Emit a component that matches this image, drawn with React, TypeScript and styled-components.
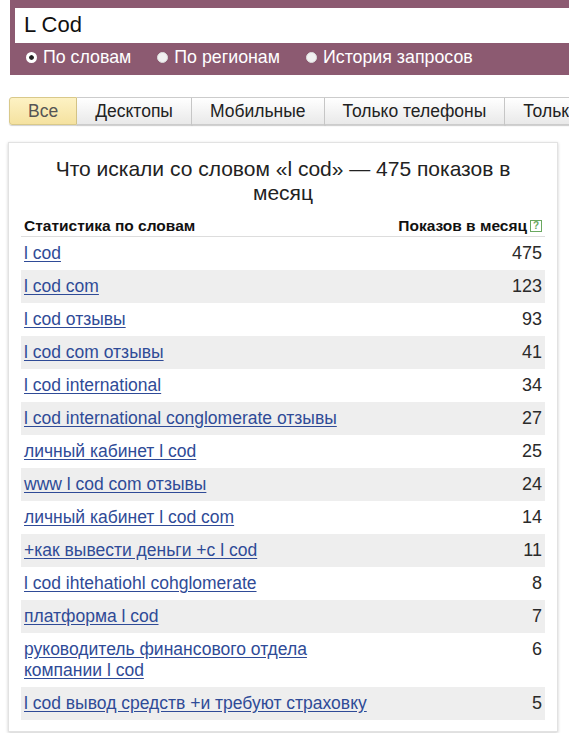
import { createGlobalStyle, styled } from 'styled-components';

const COLOR = {
  PURPLE: '#8c5a71',
  LINK: '#2f4b97',
  TEXT: '#2a2a2a',
  ZEBRA: '#eeeeee',
  LINE: '#dddddd',
};

const rows = [
  { id: 0, text: 'l cod', count: 475 },
  { id: 1, text: 'l cod com', count: 123 },
  { id: 2, text: 'l cod отзывы', count: 93 },
  { id: 3, text: 'l cod com отзывы', count: 41 },
  { id: 4, text: 'l cod international', count: 34 },
  { id: 5, text: 'l cod international conglomerate отзывы', count: 27 },
  { id: 6, text: 'личный кабинет l cod', count: 25 },
  { id: 7, text: 'www l cod com отзывы', count: 24 },
  { id: 8, text: 'личный кабинет l cod com', count: 14 },
  { id: 9, text: '+как вывести деньги +с l cod', count: 11 },
  { id: 10, text: 'l cod ihtehatiohl cohglomerate', count: 8 },
  { id: 11, text: 'платформа l cod', count: 7 },
  { id: 12, text: 'руководитель финансового отдела\nкомпании l cod', count: 6 },
  { id: 13, text: 'l cod вывод средств +и требуют страховку', count: 5 },
];

const tabs = ['Все', 'Десктопы', 'Мобильные', 'Только телефоны', 'Только планшеты'];
const modes = ['По словам', 'По регионам', 'История запросов'];

const GlobalStyle = createGlobalStyle`
  html, body {
    margin: 0;
    padding: 0;
    background: #ffffff;
    overflow: hidden;
  }
  body {
    font-family: 'Liberation Sans', Arial, sans-serif;
    color: ${COLOR.TEXT};
  }
`;

const App = () => {
  return (
    <>
      <GlobalStyle />
      <Page>
        <SearchHeader>
          <SearchInput>L Cod</SearchInput>
          <ModeRow>
            {modes.map((mode, i) => (
              <ModeOption key={mode}>
                <Radio $checked={i === 0} />
                {mode}
              </ModeOption>
            ))}
          </ModeRow>
        </SearchHeader>

        <Tabs>
          {tabs.map((tab, i) => (
            <Tab key={tab} $active={i === 0}>
              {tab}
            </Tab>
          ))}
        </Tabs>

        <Card>
          <Title>Что искали со словом «l cod» — 475 показов в месяц</Title>
          <Table>
            <HeadRow>
              <HeadCell>Статистика по словам</HeadCell>
              <HeadCell>
                Показов в месяц
                <HelpIcon>?</HelpIcon>
              </HeadCell>
            </HeadRow>
            {rows.map((row, i) => (
              <Row key={row.id} $odd={i % 2 === 1}>
                <NameCell>
                  <Link href="#">{row.text}</Link>
                </NameCell>
                <CountCell>{row.count}</CountCell>
              </Row>
            ))}
          </Table>
        </Card>
      </Page>
    </>
  );
};

const Page = styled.div`
  width: 569px;
  height: 733px;
  overflow: hidden;
`;

const SearchHeader = styled.div`
  margin-left: 10px;
  width: 700px;
  height: 75px;
  box-sizing: border-box;
  padding: 8px 0 0 5px;
  background-color: ${COLOR.PURPLE};
`;

const SearchInput = styled.div`
  height: 35px;
  box-sizing: border-box;
  padding: 3px 9px;
  background: #ffffff;
  font-size: 22px;
  line-height: 28px;
  color: #111111;
`;

const ModeRow = styled.div`
  display: flex;
  align-items: center;
  height: 28px;
  padding-left: 11px;
  gap: 26px;
`;

const ModeOption = styled.div`
  display: flex;
  align-items: center;
  gap: 6px;
  font-size: 17.8px;
  color: #ffffff;
  white-space: nowrap;
`;

const Radio = styled.span<{ $checked: boolean }>`
  width: 11px;
  height: 11px;
  border-radius: 50%;
  box-sizing: border-box;
  background: ${({ $checked }) => ($checked ? '#ffffff' : '#f1f1f1')};
  border: ${({ $checked }) => ($checked ? '3px solid #ffffff' : '1px solid #dddddd')};
  box-shadow: ${({ $checked }) => ($checked ? 'inset 0 0 0 3px #222222' : 'none')};
`;

const Tabs = styled.div`
  display: flex;
  margin: 22px 0 0 9px;
  height: 28px;
  white-space: nowrap;
`;

const Tab = styled.div<{ $active: boolean }>`
  display: flex;
  align-items: center;
  padding: 0 18px;
  box-sizing: border-box;
  height: 28px;
  font-size: 17.5px;
  color: ${({ $active }) => ($active ? '#555555' : '#222222')};
  border: 1px solid ${({ $active }) => ($active ? '#d9c98a' : '#cccccc')};
  border-left-width: 0;
  border-radius: ${({ $active }) => ($active ? '3px 0 0 3px' : '0')};
  background: ${({ $active }) =>
    $active
      ? 'linear-gradient(to bottom, #fdf2c4, #f5e2a0)'
      : 'linear-gradient(to bottom, #ffffff, #e9e9e9)'};
  box-shadow: 0 1px 1px rgba(0, 0, 0, 0.18);

  &:first-child {
    border-left-width: 1px;
  }
`;

const Card = styled.div`
  margin: 17px 0 0 8px;
  width: 550px;
  box-sizing: border-box;
  padding: 14px 12px 11px;
  border: 1px solid #e2e2e2;
  box-shadow: 0 1px 3px rgba(0, 0, 0, 0.2);
  background: #ffffff;
`;

const Title = styled.div`
  padding: 0 30px;
  text-align: center;
  font-size: 21px;
  line-height: 24px;
  color: #222222;
`;

const Table = styled.div`
  display: flex;
  flex-direction: column;
  margin-top: 10px;
`;

const HeadRow = styled.div`
  display: flex;
  justify-content: space-between;
  align-items: center;
  height: 21px;
  padding: 0 3px 0 3px;
  border-bottom: 1px solid ${COLOR.LINE};
`;

const HeadCell = styled.div`
  display: flex;
  align-items: center;
  gap: 3px;
  font-size: 15.5px;
  font-weight: bold;
  color: #111111;
`;

const HelpIcon = styled.span`
  display: inline-flex;
  align-items: center;
  justify-content: center;
  width: 12px;
  height: 12px;
  box-sizing: border-box;
  border: 1px solid #6aa860;
  color: #6aa860;
  font-size: 10px;
  font-weight: bold;
  line-height: 1;
`;

const Row = styled.div<{ $odd: boolean }>`
  display: flex;
  justify-content: space-between;
  align-items: flex-start;
  padding: 6px 3px;
  background-color: ${({ $odd }) => ($odd ? COLOR.ZEBRA : 'transparent')};
  font-size: 17.5px;
  line-height: 21px;
`;

const NameCell = styled.div`
  white-space: pre-line;
`;

const Link = styled.a`
  color: ${COLOR.LINK};
  text-decoration: underline;
  text-underline-offset: 2px;
`;

const CountCell = styled.div`
  color: ${COLOR.TEXT};
  font-size: 18px;
  text-align: right;
`;

export default App;
